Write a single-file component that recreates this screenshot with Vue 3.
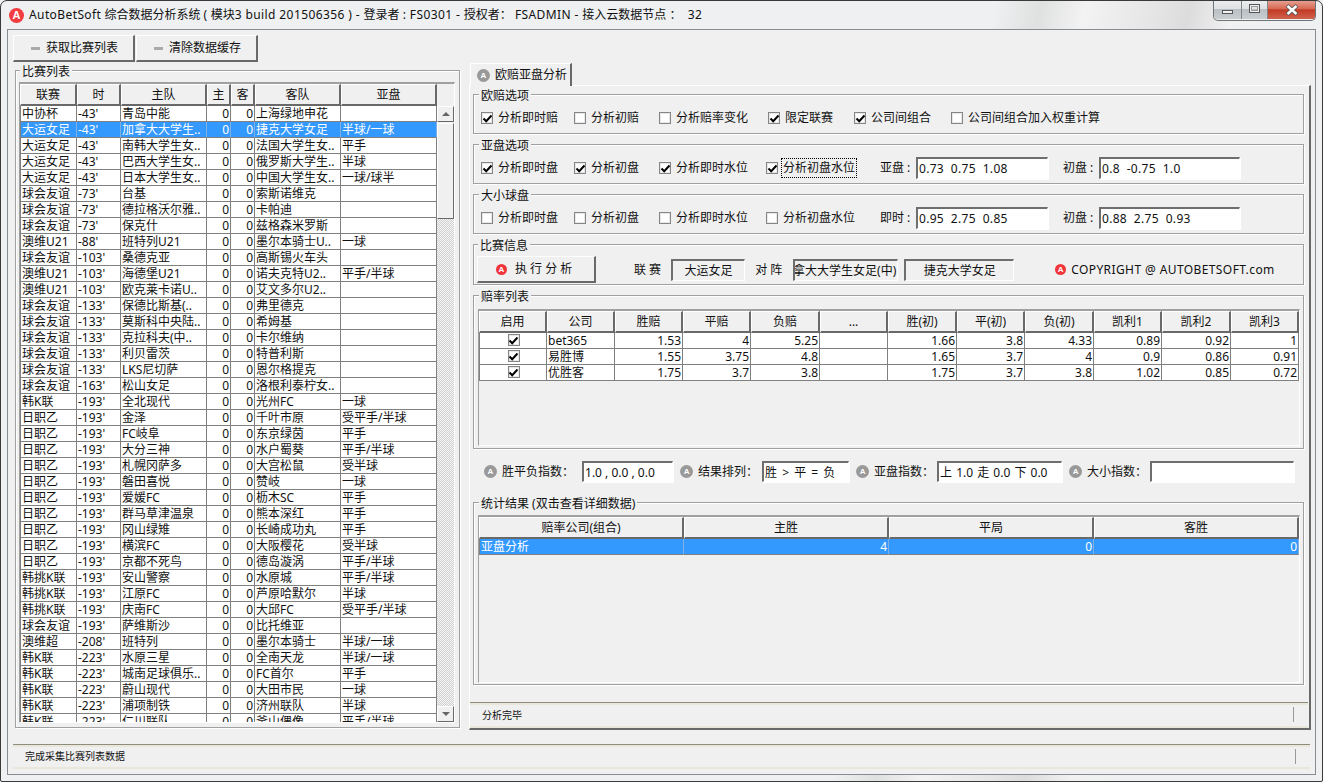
<script setup>
// 比赛列表 rows: league, time, home, away, handicap
const A = '大运女足', F = '球会友谊', W = '澳维U21', J = '日职乙', K = '韩K联', T = '韩挑K联'
const matches = [
  ['中协杯', "-43'", '青岛中能', '上海绿地申花', ''],
  [A, "-43'", '加拿大大学生..', '捷克大学女足', '半球/一球'],
  [A, "-43'", '南韩大学生女..', '法国大学生女..', '平手'],
  [A, "-43'", '巴西大学生女..', '俄罗斯大学生..', '半球'],
  [A, "-43'", '日本大学生女..', '中国大学生女..', '一球/球半'],
  [F, "-73'", '台基', '索斯诺维克', ''],
  [F, "-73'", '德拉格沃尔雅..', '卡帕迪', ''],
  [F, "-73'", '保克什', '兹格森米罗斯', ''],
  [W, "-88'", '班特列U21', '墨尔本骑士U..', '一球'],
  [F, "-103'", '桑德克亚', '高斯锡火车头', ''],
  [W, "-103'", '海德堡U21', '诺夫克特U2..', '平手/半球'],
  [W, "-103'", '欧克莱卡诺U..', '艾文多尔U2..', ''],
  [F, "-133'", '保德比斯基(..', '弗里德克', ''],
  [F, "-133'", '莫斯科中央陆..', '希姆基', ''],
  [F, "-133'", '克拉科夫(中..', '卡尔维纳', ''],
  [F, "-133'", '利贝雷茨', '特普利斯', ''],
  [F, "-133'", 'LKS尼切萨', '恩尔格提克', ''],
  [F, "-163'", '松山女足', '洛根利泰柠女..', ''],
  [K, "-193'", '全北现代', '光州FC', '一球'],
  [J, "-193'", '金泽', '千叶市原', '受平手/半球'],
  [J, "-193'", 'FC岐阜', '东京绿茵', '平手'],
  [J, "-193'", '大分三神', '水户蜀葵', '平手/半球'],
  [J, "-193'", '札幌冈萨多', '大宫松鼠', '受半球'],
  [J, "-193'", '磐田喜悦', '赞岐', '一球'],
  [J, "-193'", '爱媛FC', '枥木SC', '平手'],
  [J, "-193'", '群马草津温泉', '熊本深红', '平手'],
  [J, "-193'", '冈山绿雉', '长崎成功丸', '平手'],
  [J, "-193'", '横滨FC', '大阪樱花', '受半球'],
  [J, "-193'", '京都不死鸟', '德岛漩涡', '平手/半球'],
  [T, "-193'", '安山警察', '水原城', '平手/半球'],
  [T, "-193'", '江原FC', '芦原哈默尔', '半球'],
  [T, "-193'", '庆南FC', '大邱FC', '受平手/半球'],
  [F, "-193'", '萨维斯沙', '比托维亚', ''],
  ['澳维超', "-208'", '班特列', '墨尔本骑士', '半球/一球'],
  [K, "-223'", '水原三星', '全南天龙', '半球/一球'],
  [K, "-223'", '城南足球俱乐..', 'FC首尔', '平手'],
  [K, "-223'", '蔚山现代', '大田市民', '一球'],
  [K, "-223'", '浦项制铁', '济州联队', '半球'],
  [K, "-223'", '仁川联队', '釜山偶像', '平手/半球'],
]
const listCols = [57, 44, 86, 24, 24, 86, 96]
const listHead = ['联赛', '时', '主队', '主', '客', '客队', '亚盘']

const euroOpts = [
  ['分析即时赔', true], ['分析初赔', false], ['分析赔率变化', false],
  ['限定联赛', true], ['公司间组合', true], ['公司间组合加入权重计算', false],
]
const asiaOpts = [
  ['分析即时盘', true], ['分析初盘', true], ['分析即时水位', true], ['分析初盘水位', true],
]
const ouOpts = [
  ['分析即时盘', false], ['分析初盘', false], ['分析即时水位', false], ['分析初盘水位', false],
]

const oddsCols = [68, 68, 68, 68, 69, 68, 69, 68, 69, 68, 69, 68]
const oddsHead = ['启用', '公司', '胜赔', '平赔', '负赔', '...', '胜(初)', '平(初)', '负(初)', '凯利1', '凯利2', '凯利3']
const odds = [
  ['bet365', '1.53', '4', '5.25', '', '1.66', '3.8', '4.33', '0.89', '0.92', '1'],
  ['易胜博', '1.55', '3.75', '4.8', '', '1.65', '3.7', '4', '0.9', '0.86', '0.91'],
  ['优胜客', '1.75', '3.7', '3.8', '', '1.75', '3.7', '3.8', '1.02', '0.85', '0.72'],
]
const statHead = ['赔率公司(组合)', '主胜', '平局', '客胜']
</script>

<template>
  <div class="window">
    <div class="titlebar">
      <span class="logo">A</span>
      <span class="title"><span class="lat">AutoBetSoft</span> 综合数据分析系统 <span class="lat">(</span> 模块<span class="lat">3 build 201506356 ) - </span>登录者 <span class="lat">: FS0301 - </span>授权者： <span class="lat">FSADMIN - </span>接入云数据节点 ：&nbsp; <span class="lat">32</span></span>
      <div class="winbtns">
        <div class="wb wb-min"><i></i></div>
        <div class="wb wb-max"><i></i></div>
        <div class="wb wb-close">
          <svg width="16" height="12" viewBox="0 0 16 12"><path d="M3 1.5 L13 10.5 M13 1.5 L3 10.5" stroke="#555" stroke-width="4" /><path d="M3.5 2 L12.5 10 M12.5 2 L3.5 10" stroke="#fff" stroke-width="2.4" /></svg>
        </div>
      </div>
    </div>

    <div class="client">
      <div class="toolbar">
        <button class="btn"><i class="dash"></i>获取比赛列表</button>
        <button class="btn"><i class="dash"></i>清除数据缓存</button>
      </div>

      <div class="main">
        <div class="group list-group">
          <div class="legend">比赛列表</div>
          <div class="grid list-grid">
            <div class="list-clip">
              <table>
                <colgroup><col v-for="(w, i) in listCols" :key="i" :style="{ width: w + 'px' }"></colgroup>
                <thead><tr><th v-for="h in listHead" :key="h">{{ h }}</th></tr></thead>
                <tbody>
                  <tr v-for="(m, i) in matches" :key="i" :class="{ sel: i === 1 }">
                    <td>{{ m[0] }}</td>
                    <td>{{ m[1] }}</td>
                    <td>{{ m[2] }}</td>
                    <td class="num">0</td>
                    <td class="num">0</td>
                    <td>{{ m[3] }}</td>
                    <td>{{ m[4] }}</td>
                  </tr>
                </tbody>
              </table>
            </div>
            <div class="scrollbar">
              <div class="sb-btn"><i class="tri up"></i></div>
              <div class="sb-thumb"></div>
              <div class="sb-track"></div>
              <div class="sb-btn"><i class="tri down"></i></div>
            </div>
          </div>
        </div>

        <div class="right">
          <div class="tab"><span class="ico-gray">A</span>欧赔亚盘分析</div>
          <div class="page">
            <div class="group g-opt">
              <div class="legend">欧赔选项</div>
              <div class="opt-row euro">
                <label v-for="o in euroOpts" :key="o[0]" class="chk">
                  <span class="cb"><svg v-if="o[1]" width="11" height="11" viewBox="0 0 11 11"><path d="M1.5 5.5 L4.2 8.2 L9.5 2.5" fill="none" stroke="#000" stroke-width="2" /></svg></span>{{ o[0] }}
                </label>
              </div>
            </div>

            <div class="group g-opt">
              <div class="legend">亚盘选项</div>
              <div class="opt-row asia">
                <label v-for="(o, i) in asiaOpts" :key="o[0]" class="chk">
                  <span class="cb"><svg v-if="o[1]" width="11" height="11" viewBox="0 0 11 11"><path d="M1.5 5.5 L4.2 8.2 L9.5 2.5" fill="none" stroke="#000" stroke-width="2" /></svg></span><span :class="{ focus: i === 3 }">{{ o[0] }}</span>
                </label>
                <span class="lbl">亚盘 :</span><div class="input w-a">0.73&nbsp; 0.75&nbsp; 1.08</div>
                <span class="lbl lbl2">初盘 :</span><div class="input w-b">0.8&nbsp; -0.75&nbsp; 1.0</div>
              </div>
            </div>

            <div class="group g-opt">
              <div class="legend">大小球盘</div>
              <div class="opt-row asia">
                <label v-for="o in ouOpts" :key="o[0]" class="chk">
                  <span class="cb"></span><span>{{ o[0] }}</span>
                </label>
                <span class="lbl">即时 :</span><div class="input w-a">0.95&nbsp; 2.75&nbsp; 0.85</div>
                <span class="lbl lbl2">初盘 :</span><div class="input w-b">0.88&nbsp; 2.75&nbsp; 0.93</div>
              </div>
            </div>

            <div class="group g-info">
              <div class="legend">比赛信息</div>
              <div class="info-row">
                <button class="btn run"><span class="ico-red">A</span>执 行 分 析</button>
                <span class="info-lbl l1">联 赛</span>
                <div class="ro r1">大运女足</div>
                <span class="info-lbl l2">对 阵</span>
                <div class="ro r2"><span>拿大大学生女足(中)</span></div>
                <div class="ro r3">捷克大学女足</div>
                <span class="ico-red copy-ico">A</span>
                <span class="copy">COPYRIGHT @ AUTOBETSOFT.com</span>
              </div>
            </div>

            <div class="group g-odds">
              <div class="legend">赔率列表</div>
              <div class="grid odds-grid">
                <table>
                  <colgroup><col v-for="(w, i) in oddsCols" :key="i" :style="{ width: w + 'px' }"></colgroup>
                  <thead><tr><th v-for="h in oddsHead" :key="h">{{ h }}</th></tr></thead>
                  <tbody>
                    <tr v-for="r in odds" :key="r[0]">
                      <td class="ctr"><span class="cb cb-sm"><svg width="11" height="11" viewBox="0 0 11 11"><path d="M1.5 5.5 L4.2 8.2 L9.5 2.5" fill="none" stroke="#000" stroke-width="2" /></svg></span></td>
                      <td>{{ r[0] }}</td>
                      <td v-for="(v, i) in r.slice(1)" :key="i" class="num">{{ v }}</td>
                    </tr>
                  </tbody>
                </table>
              </div>
            </div>

            <div class="index-row">
              <span class="ico-gray">A</span><span class="idx-lbl">胜平负指数：</span><div class="input i1">1.0 , 0.0 , 0.0</div>
              <span class="ico-gray">A</span><span class="idx-lbl">结果排列：</span><div class="input i2">胜 &gt; 平 = 负</div>
              <span class="ico-gray">A</span><span class="idx-lbl">亚盘指数：</span><div class="input i3">上 1.0 走 0.0 下 0.0</div>
              <span class="ico-gray">A</span><span class="idx-lbl">大小指数：</span><div class="input i4"></div>
            </div>

            <div class="group g-stat">
              <div class="legend">统计结果 (双击查看详细数据)</div>
              <div class="grid stat-grid">
                <table>
                  <colgroup><col v-for="h in statHead" :key="h" class="stat-col"></colgroup>
                  <thead><tr><th v-for="h in statHead" :key="h">{{ h }}</th></tr></thead>
                  <tbody>
                    <tr class="sel">
                      <td>亚盘分析</td>
                      <td class="num">4</td>
                      <td class="num">0</td>
                      <td class="num">0</td>
                    </tr>
                  </tbody>
                </table>
              </div>
            </div>

            <div class="status inner"><span>分析完毕</span><i class="sep"></i></div>
          </div>
        </div>
      </div>

      <div class="status outer"><span>完成采集比赛列表数据</span><i class="sep"></i></div>
    </div>
  </div>
</template>

<style scoped>
.window {
  width: 1323px;
  height: 782px;
  box-sizing: border-box;
  border: 1px solid #3a3a3a;
  border-radius: 7px 7px 2px 2px;
  padding: 0 6px 6px;
  display: flex;
  flex-direction: column;
  overflow: hidden;
  color: #111;
  font: 12px/16px "Noto Sans", "Noto Sans CJK SC", sans-serif;
  background:
    linear-gradient(102deg, transparent 67%, #dfe0e0 70%, #f3f3f3 73%, #e4e4e4 78%, #dcdcdc 80%, #f1f1f1 83%, transparent 87%),
    #eef0f1;
}
.titlebar {
  height: 28px;
  flex: none;
  display: flex;
  align-items: center;
  padding-left: 2px;
  position: relative;
}
.logo {
  width: 15px;
  height: 15px;
  border-radius: 50%;
  background: #f13c41;
  color: #fff;
  font: bold 11px/15px "Liberation Sans", sans-serif;
  text-align: center;
  margin-right: 5px;
  margin-top: 1px;
  flex: none;
}
.title { white-space: nowrap; }
.lat { letter-spacing: 0.4px; }
.winbtns {
  position: absolute;
  right: 0;
  top: -1px;
  height: 20px;
  display: flex;
  border: 1px solid #6f7477;
  border-top: 0;
  border-radius: 0 0 5px 5px;
  overflow: hidden;
}
.wb {
  height: 19px;
  display: flex;
  align-items: center;
  justify-content: center;
  background: linear-gradient(#eceeef 0, #dfe2e4 45%, #b9bfc3 50%, #c9ced1 100%);
  border-right: 1px solid #80868a;
}
.wb-min { width: 27px; }
.wb-min i { display: block; width: 11px; height: 4px; border: 1px solid #555; background: #f4f4f4; margin-top: 5px; box-sizing: border-box; }
.wb-max { width: 25px; }
.wb-max i { display: block; width: 11px; height: 9px; border: 1px solid #555; box-sizing: border-box; box-shadow: inset 0 0 0 1px #eee, inset 0 0 0 2px #999; margin-top: -2px; }
.wb-close {
  width: 47px;
  border-right: 0;
  background: linear-gradient(#e8a596 0, #d86a55 45%, #c23a24 52%, #d0624e 100%);
}
.client {
  flex: 1;
  min-height: 0;
  border: 1px solid #868c91;
  background: #f0f0f0;
  padding: 0 5px;
  display: flex;
  flex-direction: column;
}
.toolbar {
  display: flex;
  gap: 1px;
  padding-top: 5px;
  flex: none;
}
.btn {
  height: 27px;
  width: 122px;
  box-sizing: border-box;
  background: #f0f0f0;
  border: 1px solid #fff;
  border-right: 2px solid #696969;
  border-bottom: 2px solid #696969;
  font: inherit;
  color: inherit;
  padding: 0;
  display: flex;
  align-items: center;
}
.dash {
  display: block;
  width: 9px;
  height: 3px;
  background: #aaa;
  margin: 0 6px 0 17px;
}
.main {
  display: flex;
  height: 667px;
  margin-top: 1px;
  flex: none;
}
.group {
  border: 1px solid #a0a0a0;
  box-shadow: inset 1px 1px 0 #fff, 1px 1px 0 #fff;
  box-sizing: border-box;
  padding: 0 4px;
  flex: none;
}
.legend {
  margin: -7px 0 0 1px;
  padding: 0 2px;
  height: 16px;
  width: fit-content;
  background: #f0f0f0;
  line-height: 16px;
  position: relative;
}
.list-group {
  width: 445px;
  height: 658px;
  margin: 7px 0 0 2px;
  padding: 0 3px;
}
.grid {
  box-sizing: border-box;
  border: 1px solid #a0a0a0;
  border-right-color: #fff;
  border-bottom-color: #fff;
  border-top-width: 2px;
}
.list-grid {
  margin-top: 2px;
  height: 641px;
  width: 436px;
  display: flex;
  overflow: hidden;
}
.list-clip {
  width: 417px;
  height: 100%;
  overflow: hidden;
  flex: none;
}
table {
  table-layout: fixed;
  border-collapse: separate;
  border-spacing: 0;
  width: 100%;
}
th {
  height: 22px;
  box-sizing: border-box;
  padding: 0;
  font-weight: normal;
  text-align: center;
  background: #f0f0f0;
  border-top: 1px solid #fff;
  border-left: 1px solid #fff;
  border-right: 2px solid #696969;
  border-bottom: 2px solid #696969;
  white-space: nowrap;
  overflow: hidden;
}
td {
  height: 16px;
  box-sizing: border-box;
  padding: 0 0 0 1px;
  line-height: 15px;
  background: #fff;
  border-right: 1px solid #808080;
  border-bottom: 1px solid #808080;
  white-space: nowrap;
  overflow: hidden;
}
td:first-child { border-left: 1px solid #808080; }
td.num { text-align: right; padding: 0 1px 0 0; }
td.ctr { text-align: center; }
tr.sel td { background: #3399ff; color: #fff; border-right-color: #7fb0e0; }
.scrollbar {
  width: 17px;
  flex: none;
  margin-top: 22px;
  display: flex;
  flex-direction: column;
}
.sb-btn {
  height: 16px;
  width: 17px;
  flex: none;
  box-sizing: border-box;
  background: #f0f0f0;
  border: 1px solid #fff;
  border-right: 1px solid #696969;
  border-bottom: 1px solid #696969;
  display: flex;
  align-items: center;
  justify-content: center;
}
.tri { width: 0; height: 0; border-left: 4px solid transparent; border-right: 4px solid transparent; }
.tri.up { border-bottom: 4px solid #666; }
.tri.down { border-top: 4px solid #666; }
.sb-thumb {
  height: 96px;
  flex: none;
  margin-top: 1px;
  box-sizing: border-box;
  background: #f0f0f0;
  border: 1px solid #fff;
  border-right: 1px solid #696969;
  border-bottom: 1px solid #696969;
}
.sb-track {
  flex: 1;
  background: repeating-conic-gradient(#cfcfcf 0 25%, #f6f6f6 0 50%) 0 0 / 2px 2px;
}
.right {
  margin-left: 9px;
  width: 842px;
  display: flex;
  flex-direction: column;
}
.tab {
  margin-left: 1px;
  width: 102px;
  height: 23px;
  box-sizing: border-box;
  border-top: 1px solid #fff;
  border-left: 1px solid #fff;
  border-right: 2px solid #696969;
  border-radius: 2px 0 0 0;
  background: #f0f0f0;
  display: flex;
  align-items: center;
  padding-left: 6px;
  flex: none;
  position: relative;
  margin-bottom: -1px;
}
.tab .ico-gray { margin-right: 5px; }
.ico-gray {
  width: 13px;
  height: 13px;
  flex: none;
  border-radius: 50%;
  background: #999;
  color: #fff;
  font: bold 8px/13px "Liberation Sans", sans-serif;
  text-align: center;
  display: block;
}
.ico-red {
  width: 11px;
  height: 11px;
  flex: none;
  border-radius: 50%;
  background: #f0353a;
  color: #fff;
  font: bold 8px/11px "Liberation Sans", sans-serif;
  text-align: center;
  display: block;
}
.page {
  flex: 1;
  min-height: 0;
  box-sizing: border-box;
  border-top: 1px solid #fff;
  border-left: 1px solid #fff;
  border-right: 2px solid #696969;
  border-bottom: 2px solid #696969;
  padding: 8px 5px 0 3px;
  display: flex;
  flex-direction: column;
}
.g-opt { height: 40px; margin-bottom: 10px; }
.g-info { height: 41px; margin-bottom: 10px; padding-left: 3px; }
.g-odds { height: 154px; }
.g-stat { height: 183px; }
.opt-row {
  display: grid;
  align-items: center;
  height: 22px;
  margin: 3px 0 0 3px;
}
.euro { grid-template-columns: 93px 85px 109px 86px 97px auto; }
.asia { grid-template-columns: 93px 85px 107px 114px 36px 132px 51px 141px; }
.chk { display: flex; align-items: center; white-space: nowrap; }
.cb {
  width: 12px;
  height: 12px;
  flex: none;
  box-sizing: border-box;
  border: 1px solid #858585;
  box-shadow: inset 0 0 0 1px #e8e8e8;
  background: #fff;
  margin-right: 5px;
  display: flex;
  align-items: center;
  justify-content: center;
}
.cb svg { display: block; flex: none; }
.cb-sm { display: inline-flex; margin: 1px 0 0; vertical-align: top; }
.focus { outline: 1px dotted #000; outline-offset: 1px; }
.lbl { white-space: nowrap; }
.lbl2 { padding-left: 15px; }
.input {
  height: 22px;
  box-sizing: border-box;
  background: #fff;
  border: 1px solid #fff;
  border-top: 2px solid #6e6e6e;
  border-left: 2px solid #6e6e6e;
  box-shadow: 1px 1px 0 #fff;
  line-height: 19px;
  padding-left: 1px;
  white-space: nowrap;
  overflow: hidden;
}
.w-a, .w-b { letter-spacing: 0.3px; }
.w-a { width: 132px; }
.w-b { width: 141px; }
.info-row {
  display: flex;
  align-items: center;
  height: 27px;
  margin-top: 2px;
}
.run {
  width: 119px;
  padding-left: 18px;
}
.run .ico-red { margin-right: 8px; }
.info-lbl { white-space: nowrap; }
.l1 { margin-left: 38px; }
.ro {
  height: 22px;
  box-sizing: border-box;
  border: 1px solid #fff;
  border-top: 2px solid #6e6e6e;
  border-left: 2px solid #6e6e6e;
  line-height: 19px;
  text-align: center;
  white-space: nowrap;
  overflow: hidden;
}
.r1 { width: 74px; margin-left: 10px; }
.l2 { margin-left: 10px; }
.r2 { width: 105px; margin-left: 11px; display: flex; justify-content: flex-end; padding-right: 1px; }
.r2 span { flex: none; }
.r3 { width: 110px; margin-left: 6px; }
.copy-ico { margin-left: 41px; }
.copy { margin-left: 5px; white-space: nowrap; letter-spacing: 0.4px; }
.odds-grid {
  margin-top: 4px;
  height: 137px;
  width: 822px;
}
.index-row {
  display: flex;
  align-items: center;
  height: 21px;
  margin: 12px 0 20px;
  flex: none;
  padding-left: 11px;
}
.idx-lbl { margin-left: 5px; white-space: nowrap; }
.index-row .input { height: 21px; }
.i1 { width: 91px; margin: 0 7px 0 8px; }
.i2 { width: 87px; margin: 0 7px 0 4px; word-spacing: 2px; }
.i3 { width: 125px; margin: 0 7px 0 3px; word-spacing: 1px; }
.i4 { width: 144px; margin-left: 3px; }
.stat-grid {
  margin-top: 3px;
  height: 168px;
  width: 822px;
}
.stat-col { width: 205px; }
.status {
  position: relative;
  flex: none;
  height: 26px;
  box-sizing: border-box;
  border-top: 1px solid #8f8c7e;
  border-bottom: 2px solid #e9e7da;
  box-shadow: inset 0 2px 0 #e9e7da;
  display: flex;
  align-items: center;
  padding-left: 12px;
  font-size: 10px;
}
.sep {
  position: absolute;
  top: 4px;
  right: 14px;
  height: 15px;
  width: 1px;
  background: #999;
}
.status.inner { margin: 17px -4px 0 -3px; }
.status.outer { margin-top: 14px; height: 25px; width: 1297px; }
</style>

<style>
html, body { margin: 0; background: #eef0f1; }
</style>
